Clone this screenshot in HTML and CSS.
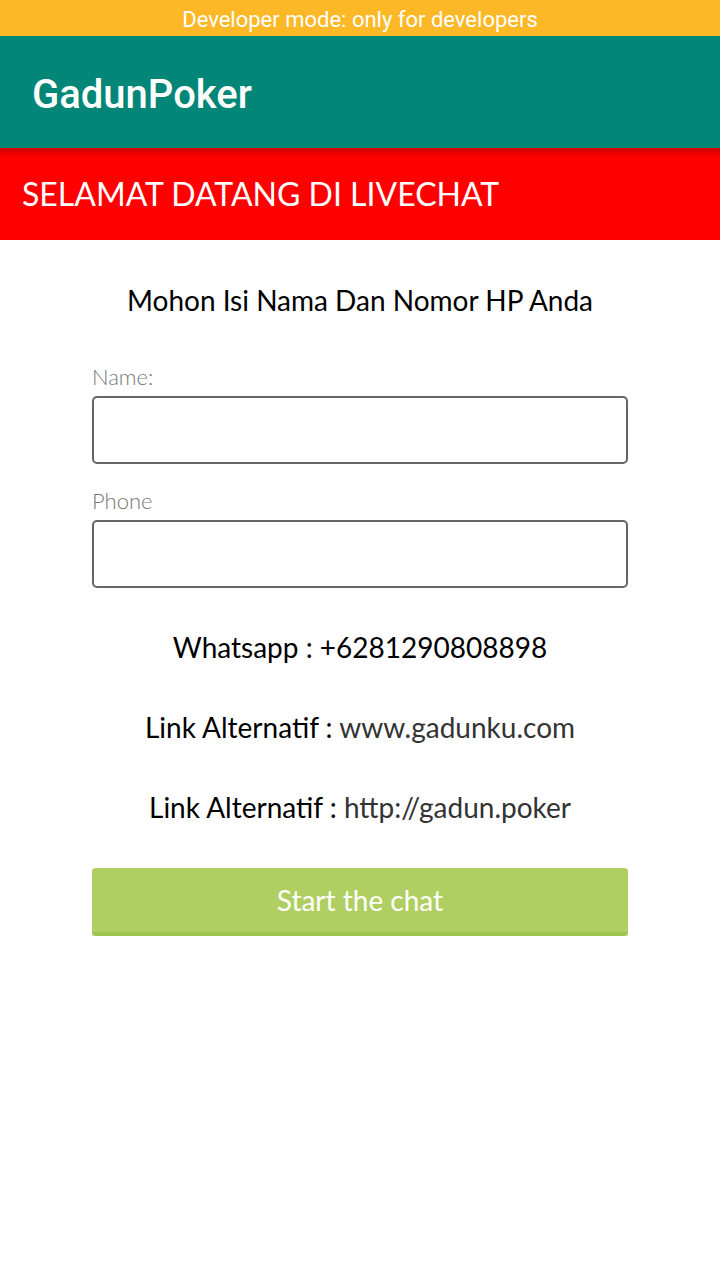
FILE: index.html
```html
<!DOCTYPE html>
<html lang="id">
<head>
  <meta charset="UTF-8" />
  <title>GadunPoker</title>
  <link rel="stylesheet" href="styles.css">
</head>
<body>

  <div class="dev-bar">Developer mode: only for developers</div>

  <div class="app-bar">
    <h1>GadunPoker</h1>
  </div>

  <div class="welcome">SELAMAT DATANG DI LIVECHAT</div>

  <div class="form">
    <p class="intro">Mohon Isi Nama Dan Nomor HP Anda</p>

    <div class="field">
      <label for="nama">Name:</label>
      <input type="text" id="nama">
    </div>

    <div class="field">
      <label for="hp">Phone</label>
      <input type="text" id="hp">
    </div>

    <div class="links">
      <p class="info">Whatsapp : +6281290808898</p>
      <p class="info">Link Alternatif : <a href="#">www.gadunku.com</a></p>
      <p class="info">Link Alternatif : <a href="#">http://gadun.poker</a></p>
    </div>

    <button class="start-btn">Start the chat</button>
  </div>

</body>
</html>
```

FILE: styles.css
```css
body {
  margin: 0;
  font-family: Lato, "Open Sans", sans-serif;
  background-color: #fff;
}
.dev-bar {
  height: 36px;
  line-height: 40px;
  background-color: #fdb827;
  color: #fff;
  font-family: Roboto, sans-serif;
  font-size: 22px;
  text-align: center;
}
.app-bar {
  box-sizing: border-box;
  height: 112px;
  background-color: #028677;
  display: flex;
  align-items: center;
  padding: 4px 0 0 32px;
}
.app-bar h1 {
  margin: 0;
  color: #fff;
  font-family: Roboto, sans-serif;
  font-weight: 500;
  font-size: 40px;
}
.welcome {
  box-sizing: border-box;
  height: 92px;
  background-color: #ff0000;
  box-shadow: inset 0 8px 6px -4px rgba(0,0,0,0.2);
  color: #fff;
  font-size: 32px;
  padding: 0 0 2px 22px;
  display: flex;
  align-items: center;
}
.form {
  width: 536px;
  margin: 0 auto;
  padding-top: 43px;
}
.intro {
  margin: 0 0 47px;
  line-height: 34px;
  text-align: center;
  font-size: 28px;
  color: #000;
}
.field + .field {
  margin-top: 24px;
}
.field label {
  display: block;
  line-height: 26px;
  font-weight: 300;
  font-size: 22px;
  color: #777;
  margin-bottom: 6px;
}
.field input {
  display: block;
  box-sizing: border-box;
  width: 100%;
  height: 68px;
  border: 2px solid #666;
  border-radius: 5px;
  font-size: 24px;
  font-family: inherit;
}
.links {
  padding-top: 19px;
}
.info {
  margin: 0;
  height: 80px;
  line-height: 80px;
  text-align: center;
  font-size: 28px;
  color: #000;
}
.info a {
  color: #333;
  text-decoration: none;
}
.start-btn {
  display: block;
  width: 100%;
  height: 68px;
  margin-top: 21px;
  border: none;
  border-bottom: 4px solid #9ec54d;
  border-radius: 4px;
  background-color: #b0cf62;
  box-shadow: 0 4px 0 #e4e4e4;
  color: #fff;
  font-family: Lato, sans-serif;
  font-size: 28px;
}
```
